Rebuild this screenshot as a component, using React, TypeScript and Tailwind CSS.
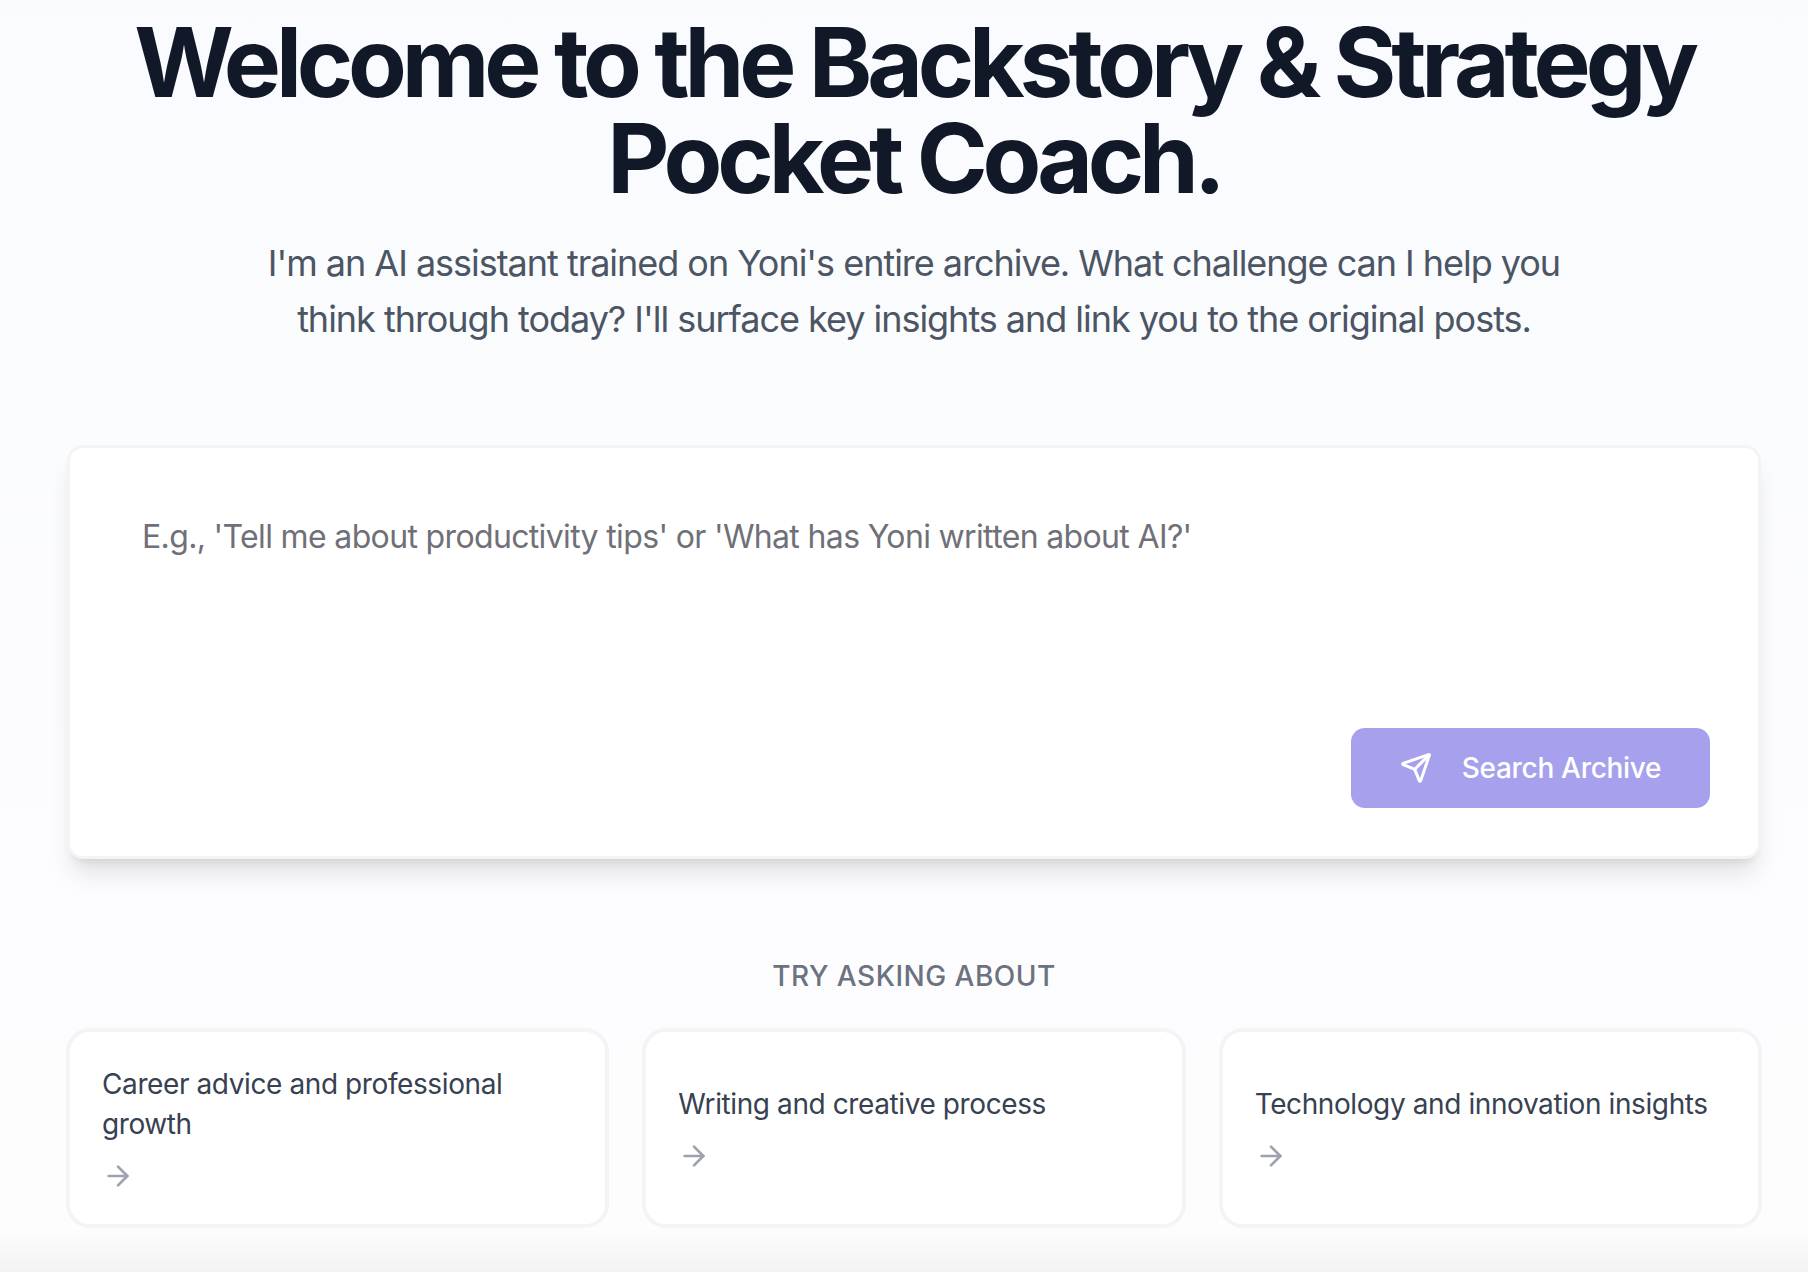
import { ArrowRight, Send } from "lucide-react";

const topics = [
  "Career advice and professional growth",
  "Writing and creative process",
  "Technology and innovation insights",
];

export default function App() {
  return (
    <div className="h-[1272px] w-[1808px] overflow-hidden bg-gradient-to-b from-[#fafbfe] to-[#fdfdfe] font-['Inter',sans-serif] flex flex-col">
      <main className="ml-[66px] w-[1696px] flex-1 flex flex-col items-center">
        <h1 className="mt-[14px] text-center text-[96px] leading-[96px] font-bold tracking-[-5.15px] whitespace-nowrap text-[#111827]">
          Welcome to the Backstory &amp; Strategy
          <br />
          Pocket Coach.
        </h1>
        <p className="mt-[29px] text-center text-[36px] leading-[56px] tracking-[-1.03px] whitespace-nowrap text-[#4b5563]">
          I'm an AI assistant trained on Yoni's entire archive. What challenge can I help you
          <br />
          think through today? I'll surface key insights and link you to the original posts.
        </p>
        <section className="mt-[98px] w-[1694px] h-[414px] rounded-[16px] border-[3px] border-[#f3f4f6] bg-white shadow-[0_20px_25px_-5px_rgba(0,0,0,0.1),0_8px_10px_-6px_rgba(0,0,0,0.1)] pt-[69px] pr-[48px] pb-[48px] pl-[72px] flex flex-col justify-between">
          <div className="text-[32px] leading-[40px] tracking-[-0.65px] text-[#6f7078]">
            E.g., 'Tell me about productivity tips' or 'What has Yoni written about AI?'
          </div>
          <div className="flex justify-end">
            <button className="flex h-[80px] w-[359px] items-center justify-center gap-[30px] rounded-[14px] bg-[#a7a1ed] text-[28px] font-medium tracking-[-0.3px] text-white">
              <Send size={32} strokeWidth={2.25} />
              Search Archive
            </button>
          </div>
        </section>
        <h2 className="mt-[97px] text-center text-[28px] leading-[40px] font-medium tracking-[0.5px] text-[#6b7280] uppercase">
          Try asking about
        </h2>
        <div className="mt-[32px] grid w-full grid-cols-3 gap-[33px]">
          {topics.map((t) => (
            <div
              key={t}
              className="flex h-[200px] flex-col justify-center rounded-[24px] border-[4px] border-[#f3f4f6] bg-white px-[32px] text-[28px] leading-[40px] tracking-[-0.4px] text-[#374151]"
            >
              <span>{t}</span>
              <ArrowRight size={32} strokeWidth={2} className="mt-[16px] text-[#9ca3af]" />
            </div>
          ))}
        </div>
      </main>
      <div className="h-[44px] bg-gradient-to-b from-[#fdfdfe] to-[#f3f3f4]" />
    </div>
  );
}
